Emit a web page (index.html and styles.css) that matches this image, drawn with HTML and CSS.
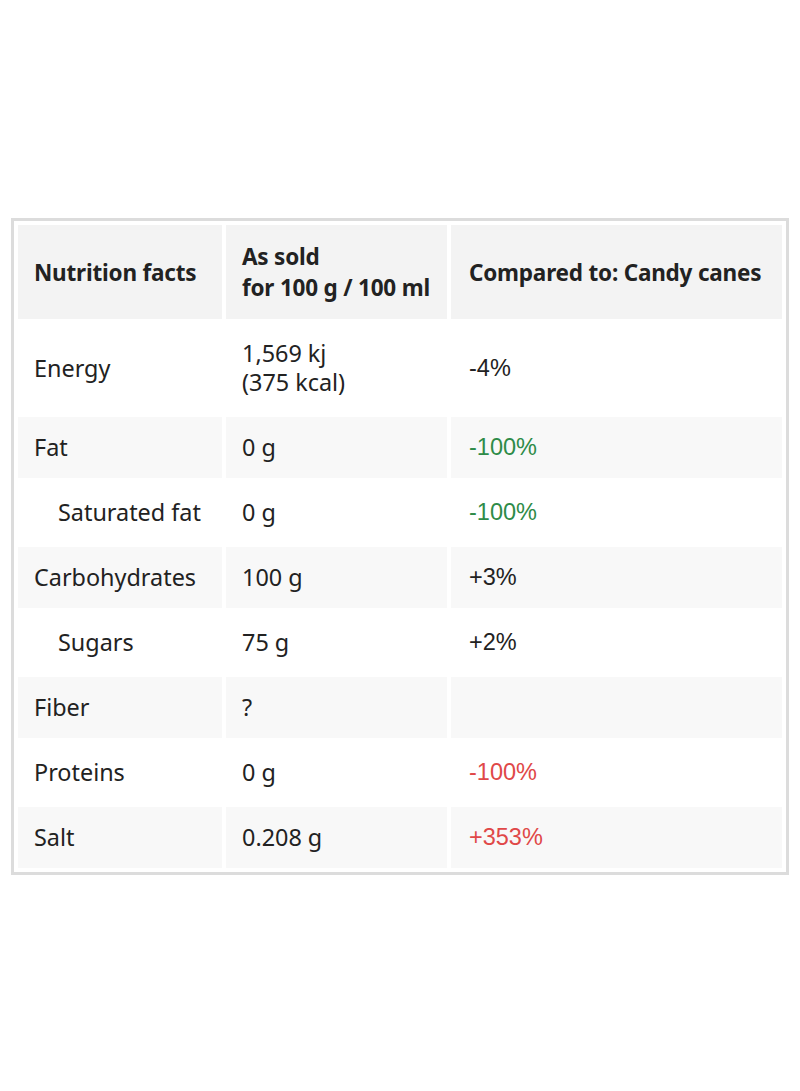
FILE: index.html
```html
<!DOCTYPE html>
<html>
<head>
<meta charset="utf-8">
<link rel="stylesheet" href="styles.css">
</head>
<body>
<div class="page">
  <table class="facts">
    <thead>
      <tr>
        <th class="c1">Nutrition facts</th>
        <th class="c2">As sold<br>for 100 g / 100 ml</th>
        <th class="c3">Compared to: Candy canes</th>
      </tr>
    </thead>
    <tbody>
      <tr>
        <td>Energy</td>
        <td>1,569 kj<br>(375 kcal)</td>
        <td class="pct">-4%</td>
      </tr>
      <tr class="alt">
        <td>Fat</td>
        <td>0 g</td>
        <td class="pct good">-100%</td>
      </tr>
      <tr>
        <td class="sub">Saturated fat</td>
        <td>0 g</td>
        <td class="pct good">-100%</td>
      </tr>
      <tr class="alt">
        <td>Carbohydrates</td>
        <td>100 g</td>
        <td class="pct">+3%</td>
      </tr>
      <tr>
        <td class="sub">Sugars</td>
        <td>75 g</td>
        <td class="pct">+2%</td>
      </tr>
      <tr class="alt">
        <td>Fiber</td>
        <td>?</td>
        <td class="pct"></td>
      </tr>
      <tr>
        <td>Proteins</td>
        <td>0 g</td>
        <td class="pct bad">-100%</td>
      </tr>
      <tr class="alt">
        <td>Salt</td>
        <td>0.208 g</td>
        <td class="pct bad">+353%</td>
      </tr>
    </tbody>
  </table>
</div>
</body>
</html>
```

FILE: styles.css
```css
html, body {
  margin: 0;
  padding: 0;
  background: #ffffff;
}
.page {
  padding-top: 218px;
  padding-left: 11px;
}
.facts {
  width: 778px;
  table-layout: fixed;
  border: 3px solid #dcdcdc;
  border-spacing: 4px;
  border-collapse: separate;
  font-family: "Noto Sans", sans-serif;
  font-size: 23.4px;
  color: #222222;
}
.facts th {
  background: #f3f3f3;
  font-weight: 700;
  font-size: 22.5px;
  letter-spacing: -0.2px;
  white-space: nowrap;
  text-align: left;
  padding: 16px 16px;
  line-height: 31px;
  height: 62px;
}
.facts td {
  padding: 16px 16px;
  line-height: 29px;
  white-space: nowrap;
}
.facts .c1 { width: 172px; }
.facts .c2 { width: 189px; }
.facts .c3 { padding-left: 18px; }
.alt td {
  background: #f8f8f8;
}
.facts .sub {
  padding-left: 40px;
}
.facts .pct {
  font-family: "Liberation Sans", Arial, sans-serif;
  font-size: 23.5px;
  padding-left: 18px;
}
.good { color: #2e8b48; }
.bad { color: #e04848; }
```
